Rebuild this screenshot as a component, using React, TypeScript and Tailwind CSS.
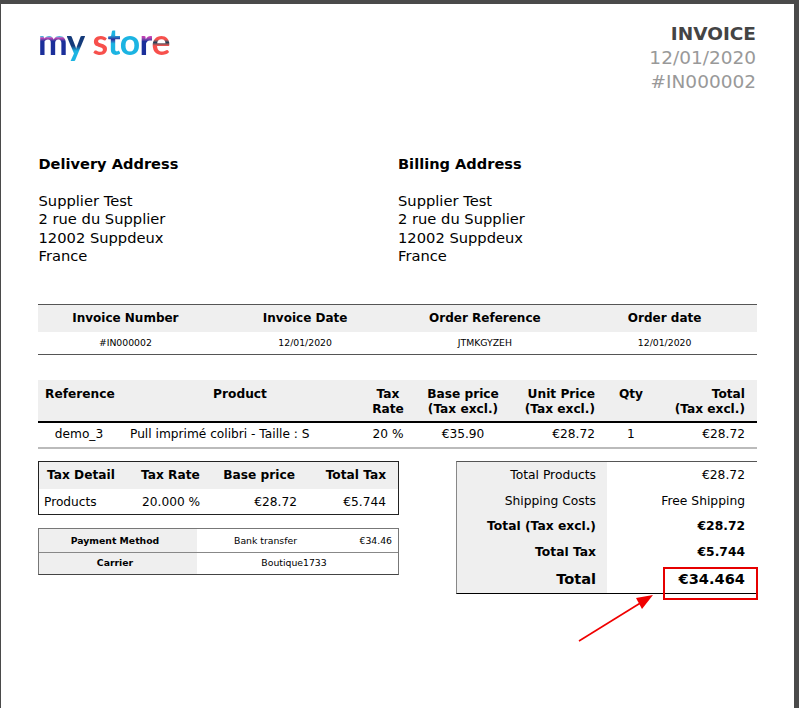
const dejavu = "font-['DejaVu_Sans',sans-serif]";

function Logo() {
  return (
    <div className="h-[44px] pt-[1px] font-['Lato',sans-serif] text-[35.5px] font-bold leading-[38px] tracking-[-0.7px] blur-[0.5px]">
      <span className="text-transparent bg-clip-text bg-linear-to-b from-[#24b6dc] from-38% via-[#c23fb4] via-42% to-[#1b2f9a] to-49%">m</span>
      <span className="text-transparent bg-clip-text bg-linear-to-b from-[#143a7a] from-60% to-[#1cb4e2] to-72%">y</span>
      <span className="ml-[8px] text-[#f7504c]">s</span>
      <span className="text-transparent bg-clip-text bg-linear-to-b from-[#1cb4e2] from-35% via-[#2a2a9a] via-45% to-[#1cb4e2] to-55%">t</span>
      <span className="text-[#1cb4e2]">o</span>
      <span className="text-transparent bg-clip-text bg-linear-to-b from-[#c23fb4] from-40% to-[#1b2f9a] to-50%">r</span>
      <span className="text-transparent bg-clip-text bg-linear-to-b from-[#f7504c] from-45% via-[#123f57] via-52% to-[#f7504c] to-60%">e</span>
    </div>
  );
}

function Address({ title }: { title: string }) {
  return (
    <div>
      <h2 className="text-[14.6px] font-bold leading-[18px]">{title}</h2>
      <div className="mt-[19px] text-[14.7px] leading-[18.4px]">
        <p>Supplier Test</p>
        <p>2 rue du Supplier</p>
        <p>12002 Suppdeux</p>
        <p>France</p>
      </div>
    </div>
  );
}

const infoCols = [
  ["Invoice Number", "#IN000002"],
  ["Invoice Date", "12/01/2020"],
  ["Order Reference", "JTMKGYZEH"],
  ["Order date", "12/01/2020"],
];

function InfoTable() {
  return (
    <div className="mt-[38px] grid grid-cols-4 border-y border-[#555]">
      {infoCols.map(([h]) => (
        <div key={h} className="h-[27px] bg-[#efefef] pr-[5px] text-center text-[12px] font-bold leading-[26px]">{h}</div>
      ))}
      {infoCols.map(([h, v]) => (
        <div key={h} className="h-[22px] pr-[5px] text-center text-[9.3px] leading-[22px]">{v}</div>
      ))}
    </div>
  );
}

function ProductTable() {
  const grid = "grid grid-cols-[86px_238px_57px_94px_93px_57px_94px]";
  return (
    <div className="mt-[25px] text-[12.2px] leading-[15px]">
      <div className={`${grid} h-[41px] bg-[#efefef] pt-[7px] font-bold`}>
        <div className="pl-[7px]">Reference</div>
        <div className="pr-[6px] text-center">Product</div>
        <div className="pr-[5px] text-center">Tax<br />Rate</div>
        <div className="pr-[6px] text-center">Base price<br />(Tax excl.)</div>
        <div className="pr-[11px] text-right">Unit Price<br />(Tax excl.)</div>
        <div className="pr-[7px] text-center">Qty</div>
        <div className="pr-[12px] text-right">Total<br />(Tax excl.)</div>
      </div>
      <div className={`${grid} h-[28px] items-center border-t-2 border-b-2 border-t-black border-b-[#bbbbbb]`}>
        <div className="pr-[4px] text-center">demo_3</div>
        <div className="pl-[6px] whitespace-nowrap">Pull imprimé colibri - Taille : S</div>
        <div className="pr-[5px] text-center">20 %</div>
        <div className="pr-[6px] text-center">€35.90</div>
        <div className="pr-[11px] text-right">€28.72</div>
        <div className="pr-[7px] text-center">1</div>
        <div className="pr-[12px] text-right">€28.72</div>
      </div>
    </div>
  );
}

function TaxTable() {
  const grid = "grid grid-cols-[93px_87px_78px_101px]";
  return (
    <div className="border border-[#222] text-[12.2px]">
      <div className={`${grid} h-[27px] items-center bg-[#efefef] font-bold`}>
        <div className="pl-[8px]">Tax Detail</div>
        <div className="pl-[9px]">Tax Rate</div>
        <div className="pr-[2px] text-right">Base price</div>
        <div className="pr-[12px] text-right">Total Tax</div>
      </div>
      <div className={`${grid} h-[25px] items-center pt-[2px]`}>
        <div className="pl-[5px]">Products</div>
        <div className="pl-[10px]">20.000 %</div>
        <div className="text-right">€28.72</div>
        <div className="pr-[12px] text-right">€5.744</div>
      </div>
    </div>
  );
}

function PaymentTable() {
  return (
    <div className="mt-[13px] border border-[#777] border-b-[#444] text-[9.3px]">
      <div className="grid h-[24px] grid-cols-[158px_1fr] border-b border-[#888] leading-[23px]">
        <div className="bg-[#efefef] pr-[6px] text-center font-bold">Payment Method</div>
        <div className="flex justify-between pl-[37px] pr-[6px]">
          <span>Bank transfer</span>
          <span>€34.46</span>
        </div>
      </div>
      <div className="grid h-[21px] grid-cols-[158px_1fr] leading-[20px]">
        <div className="bg-[#efefef] pr-[6px] text-center font-bold">Carrier</div>
        <div className="pr-[7px] text-center">Boutique1733</div>
      </div>
    </div>
  );
}

const totals = [
  { label: "Total Products", value: "€28.72", h: "h-[27px]", cls: "" },
  { label: "Shipping Costs", value: "Free Shipping", h: "h-[25px]", cls: "" },
  { label: "Total (Tax excl.)", value: "€28.72", h: "h-[26px]", cls: "font-bold" },
  { label: "Total Tax", value: "€5.744", h: "h-[26px]", cls: "font-bold" },
  { label: "Total", value: "€34.464", h: "h-[27px]", cls: "font-bold text-[14.6px]" },
];

function TotalsTable() {
  return (
    <div className="w-[301px] border-t border-l border-b border-t-[#555] border-l-[#888] border-b-black text-[12.3px]">
      {totals.map((t) => (
        <div key={t.label} className={`grid grid-cols-[150px_1fr] ${t.h} ${t.cls}`}>
          <div className="flex items-center justify-end bg-[#efefef] pr-[11px]">{t.label}</div>
          <div className="flex items-center justify-end pr-[12px]">{t.value}</div>
        </div>
      ))}
    </div>
  );
}

export default function App() {
  return (
    <div className={`${dejavu} relative h-[708px] w-[799px] overflow-hidden bg-[#4a4a4a] text-black`}>
      <div className="ml-px mt-1 mr-[5px] h-[704px] bg-white pl-[37px] pr-[37px]">
        <header className="flex justify-between pt-[18px]">
          <Logo />
          <div className="pr-px text-right text-[18.5px] leading-[24px] text-[#999999]">
            <div className="font-bold text-[#444444]">INVOICE</div>
            <div>12/01/2020</div>
            <div>#IN000002</div>
          </div>
        </header>

        <div className="mt-[61px] grid grid-cols-[359.5px_1fr] pl-[0.5px]">
          <Address title="Delivery Address" />
          <Address title="Billing Address" />
        </div>

        <InfoTable />
        <ProductTable />

        <div className="mt-[12px] flex justify-between">
          <div className="w-[361px]">
            <TaxTable />
            <PaymentTable />
          </div>
          <TotalsTable />
        </div>
      </div>

      {/* annotation drawn over the invoice */}
      <div className="absolute left-[663px] top-[567px] h-[33px] w-[95px] border-2 border-[#e60000]" />
      <svg className="absolute left-[570px] top-[585px]" width="95" height="65" viewBox="0 0 95 65">
        <path d="M9 56 L72 17" stroke="#f00000" strokeWidth="1.6" fill="none" />
        <path d="M83 10 L66 13 L72 24 Z" fill="#f00000" />
      </svg>
    </div>
  );
}
